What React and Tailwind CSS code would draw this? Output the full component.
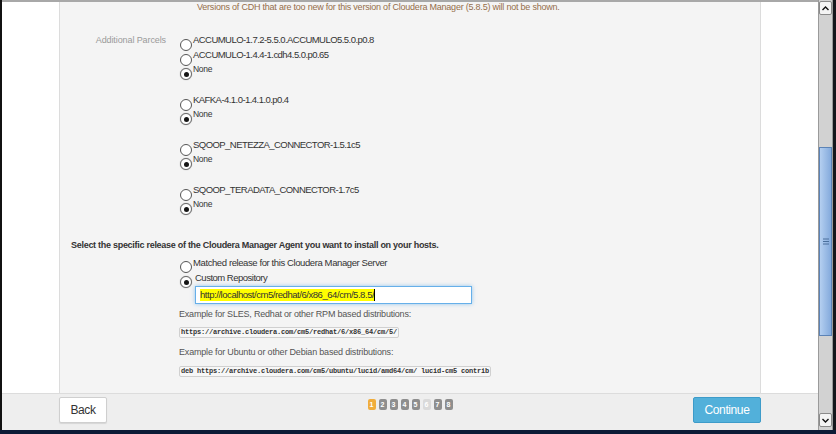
import React from 'react';

const sans = { fontFamily: '"Liberation Sans", Arial, sans-serif' };

function Radio({ checked = false, className = '' }) {
  if (checked) {
    return (
      <span className={`shrink-0 w-[12px] h-[12px] rounded-full border-[1.5px] border-[#6b6b6b] bg-white flex items-center justify-center shadow-[0_0_1px_rgba(0,0,0,0.4)] ${className}`}>
        <span className="w-[5px] h-[5px] rounded-full bg-[#151515]" />
      </span>
    );
  }
  return <span className={`shrink-0 w-[12px] h-[12px] rounded-full border border-[#555] bg-white ${className}`} />;
}

function Option({ label }) {
  return (
    <div className="flex h-[15px] items-start">
      <Radio className="mt-[7px]" />
      <span className="text-[9.5px] leading-[15px] tracking-[-0.55px] text-[#333] ml-[1px]">{label}</span>
    </div>
  );
}

function NoneOption() {
  return (
    <div className="flex h-[15px] items-start">
      <Radio checked className="mt-[6px]" />
      <span className="text-[8.5px] leading-[15px] tracking-[-0.3px] text-[#333] ml-[1px]">None</span>
    </div>
  );
}

const parcelGroups = [
  ['ACCUMULO-1.7.2-5.5.0.ACCUMULO5.5.0.p0.8', 'ACCUMULO-1.4.4-1.cdh4.5.0.p0.65'],
  ['KAFKA-4.1.0-1.4.1.0.p0.4'],
  ['SQOOP_NETEZZA_CONNECTOR-1.5.1c5'],
  ['SQOOP_TERADATA_CONNECTOR-1.7c5'],
];

const steps = [
  { n: 1, c: 'bg-[#f0ad3c]' },
  { n: 2, c: 'bg-[#8e8e8e]' },
  { n: 3, c: 'bg-[#8e8e8e]' },
  { n: 4, c: 'bg-[#8e8e8e]' },
  { n: 5, c: 'bg-[#8e8e8e]' },
  { n: 6, c: 'bg-[#dadada]' },
  { n: 7, c: 'bg-[#8e8e8e]' },
  { n: 8, c: 'bg-[#8e8e8e]' },
];

export default function App() {
  return (
    <div className="w-[836px] h-[434px] flex flex-col bg-black overflow-hidden" style={sans}>
      <div className="flex flex-1 min-h-0">
        {/* left window edge */}
        <div className="w-[2px] bg-[#111]" />

        <div className="w-[816px] flex flex-col">
          <div className="h-[2px] bg-[#a8a8a8]" />
          {/* page body */}
          <div className="flex flex-1 min-h-0 bg-white">
            <div className="w-[57px]" />
            <div className="w-[702px] border-l border-r border-[#dcdcdc] bg-[#f4f4f4] flex flex-col">
              <p className="pl-[137px] text-[9px] leading-[11px] tracking-[-0.22px] text-[#946e4a]">
                Versions of CDH that are too new for this version of Cloudera Manager (5.8.5) will not be shown.
              </p>

              {/* Additional parcels */}
              <div className="flex mt-[19px]">
                <div className="w-[106px] text-right text-[9px] leading-[15px] tracking-[-0.1px] text-[#9a9a9a] pt-[1px]">
                  Additional Parcels
                </div>
                <div className="ml-[14px] flex flex-col gap-[15px]">
                  {parcelGroups.map((g, i) => (
                    <div key={i} className="flex flex-col">
                      {g.map((l) => <Option key={l} label={l} />)}
                      <NoneOption />
                    </div>
                  ))}
                </div>
              </div>

              {/* Agent release */}
              <h3 className="mt-[26px] pl-[11px] text-[9px] leading-[14px] font-bold tracking-[-0.28px] text-[#333]">
                Select the specific release of the Cloudera Manager Agent you want to install on your hosts.
              </h3>
              <div className="ml-[120px] mt-[3px] flex flex-col">
                <div className="flex h-[15px] items-start">
                  <Radio className="mt-[6px]" />
                  <span className="text-[9.5px] leading-[15px] tracking-[-0.4px] text-[#333] ml-[1px]">Matched release for this Cloudera Manager Server</span>
                </div>
                <div className="flex h-[15px] items-start">
                  <Radio checked className="mt-[6px]" />
                  <span className="text-[9.5px] leading-[15px] tracking-[-0.5px] text-[#333] ml-[3px]">Custom Repository</span>
                </div>
                <div className="ml-[15px] mt-[1px] w-[277px] h-[18px] border border-[#66afe9] bg-white shadow-[0_0_4px_rgba(102,175,233,0.7)] flex items-center pl-[4px]">
                  <span className="bg-[#ffff00] text-[9.5px] leading-[12px] tracking-[-0.45px] text-[#333]">
                    http://localhost/cm5/redhat/6/x86_64/cm/5.8.5/
                  </span>
                  <span className="w-[1px] h-[12px] bg-black" />
                </div>
                <p className="-ml-[1px] mt-[3px] text-[9px] leading-[14px] tracking-[-0.2px] text-[#555]">
                  Example for SLES, Redhat or other RPM based distributions:
                </p>
                <div className="-ml-[1px] mt-[6px] self-start border border-[#d0d0d0] bg-[#f7f7f7] rounded-[2px] px-[1px]">
                  <code className="block text-[7px] leading-[9px] font-bold tracking-[-0.2px] text-[#333]" style={{ fontFamily: '"Liberation Mono", "Courier New", monospace' }}>
                    https://archive.cloudera.com/cm5/redhat/6/x86_64/cm/5/
                  </code>
                </div>
                <p className="-ml-[1px] mt-[7px] text-[9px] leading-[14px] tracking-[-0.18px] text-[#555]">
                  Example for Ubuntu or other Debian based distributions:
                </p>
                <div className="-ml-[1px] mt-[7px] self-start border border-[#d0d0d0] bg-[#f7f7f7] rounded-[2px] px-[1px]">
                  <code className="block text-[7px] leading-[9px] font-bold tracking-[-0.2px] text-[#333]" style={{ fontFamily: '"Liberation Mono", "Courier New", monospace' }}>
                    deb https://archive.cloudera.com/cm5/ubuntu/lucid/amd64/cm/ lucid-cm5 contrib
                  </code>
                </div>
              </div>
            </div>
            <div className="flex-1" />
          </div>

          {/* footer */}
          <div className="h-[37px] border-t border-[#dcdcdc] bg-[#eeeeee] grid grid-cols-[1fr_auto_1fr] items-start pt-[3px] px-[57px]">
            <button className="justify-self-start w-[48px] h-[26px] bg-white border border-[#cfcfcf] rounded-[2px] shadow-[0_1px_1px_rgba(0,0,0,0.1)] text-[12px] tracking-[-0.4px] text-[#333]">
              Back
            </button>
            <div className="flex gap-[3px] mt-[2px]">
              {steps.map((s) => (
                <span key={s.n} className={`w-[8px] h-[11px] rounded-[2px] text-[7px] leading-[11px] font-bold text-white text-center ${s.c}`}>
                  {s.n}
                </span>
              ))}
            </div>
            <button className="justify-self-end w-[68px] h-[26px] bg-[#52b0da] border border-[#3d9bc9] rounded-[2px] text-[12px] tracking-[-0.4px] text-white">
              Continue
            </button>
          </div>
        </div>

        {/* scrollbar */}
        <div className="w-[15px] bg-[#d2d2d2] border-l border-r border-[#9a9a9a] flex flex-col pt-[1px] pb-[3px]">
          <div className="h-[14px] bg-[#f4f4f4] border border-[#8a8a8a] rounded-[2px] flex items-center justify-center">
            <svg width="7" height="5" viewBox="0 0 7 5"><path d="M0.5 4 L3.5 1 L6.5 4" fill="none" stroke="#111" strokeWidth="1.4" /></svg>
          </div>
          <div className="flex-1 flex flex-col">
            <div className="mt-[132px] h-[189px] border border-[#5c83b6] bg-gradient-to-r from-[#b4cff0] to-[#84aadc] flex items-center justify-center">
              <svg width="6" height="7" viewBox="0 0 6 7"><path d="M0 1h6M0 3.5h6M0 6h6" stroke="#4a6f9c" strokeWidth="1" /></svg>
            </div>
          </div>
          <div className="h-[14px] bg-[#f4f4f4] border border-[#8a8a8a] rounded-[2px] flex items-center justify-center">
            <svg width="7" height="5" viewBox="0 0 7 5"><path d="M0.5 1 L3.5 4 L6.5 1" fill="none" stroke="#111" strokeWidth="1.4" /></svg>
          </div>
        </div>
        <div className="w-[3px] bg-[#15171c]" />
      </div>
      <div className="h-[4px] bg-[#0c1b36]" />
    </div>
  );
}
